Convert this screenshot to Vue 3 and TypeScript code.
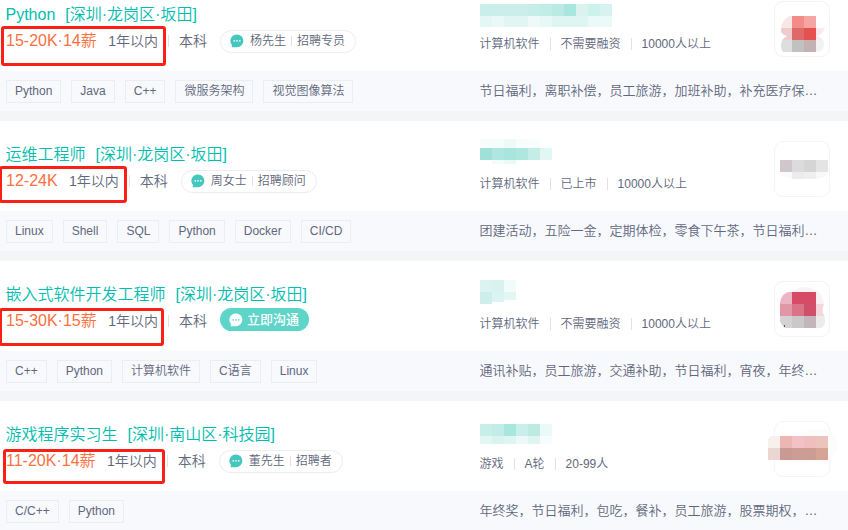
<script setup lang="ts">
interface Cell { x: number; y: number; w: number; h: number; c: string }
interface Job {
  title: string
  area: string
  salary: string
  contact?: [string, string]
  tags: string[]
  company: string[]
  benefits: string
  mark: string
  name: Cell[]
  logo: Cell[]
  clip: string
}

function row(x: number, y: number, h: number, colors: string): Cell[] {
  return colors.split(' ').map((c, i) => ({ x: x + i * 12, y, w: 12, h, c: '#' + c }))
}

const jobs: Job[] = [
  {
    title: 'Python', area: '[深圳·龙岗区·坂田]', salary: '15-20K·14薪',
    contact: ['杨先生', '招聘专员'],
    tags: ['Python', 'Java', 'C++', '微服务架构', '视觉图像算法'],
    company: ['计算机软件', '不需要融资', '10000人以上'],
    benefits: '节日福利，离职补偿，员工旅游，加班补助，补充医疗保…',
    mark: 'mark-a',
    name: [
      ...row(0, 3, 12, 'c8efe9 caefea caefea caefea c6eee8 c1ede7 b9eae4 a8e7df dbf3ef cbf2ed d6f3f2'),
      ...row(0, 15, 11, 'e3f7f5 eaf9f8 e1f6f4 e1f6f4 eef9f8 e7f8f6 dff5f2 dff5f2 dff5f2 ebf9f8 ebf9f8'),
    ],
    logo: [
      ...row(5, 15, 12, 'f9e6e6 f28c89 f6a5a2'),
      ...row(5, 27, 12, 'eecbcc df6868 e4514f fbe9eb'),
      ...row(5, 39, 12, 'dedede c1c1c2 c2b2b3 f2f2f2'),
    ],
    clip: 'M15 15H41V27H50Q47 34 42 35Q49 37 49 43Q49 51 41 51H8Q6 49 6 44Q6 38 12 35Q7 34 6 30Q6 18 15 15Z',
  },
  {
    title: '运维工程师', area: '[深圳·龙岗区·坂田]', salary: '12-24K',
    contact: ['周女士', '招聘顾问'],
    tags: ['Linux', 'Shell', 'SQL', 'Python', 'Docker', 'CI/CD'],
    company: ['计算机软件', '已上市', '10000人以上'],
    benefits: '团建活动，五险一金，定期体检，零食下午茶，节日福利…',
    mark: 'mark-b',
    name: [
      ...row(0, -2, 9, 'f8fdfc f5fcfb eef9f8 f8fcfc fafdfd'),
      ...row(0, 7, 12, '9fe1d8 afe7e0 a7e5de afe7e0 c5ede7 e2f6f3'),
      ...row(12, 19, 4, 'f4fbfa ebf9f7'),
    ],
    logo: [
      ...row(5, 19, 12, 'd0c7ca dcdcde d5d5d6 e4e4e5'),
      ...row(5, 31, 7, 'fafafa ececed efeff0 f8f8f8'),
    ],
    clip: 'M5 19H53V31Q51 38 39 38H17L5 34Z',
  },
  {
    title: '嵌入式软件开发工程师', area: '[深圳·龙岗区·坂田]', salary: '15-30K·15薪',
    tags: ['C++', 'Python', '计算机软件', 'C语言', 'Linux'],
    company: ['计算机软件', '不需要融资', '10000人以上'],
    benefits: '通讯补贴，员工旅游，交通补助，节日福利，宵夜，年终…',
    mark: 'mark-c',
    name: [
      ...row(0, -1, 12, 'dcf4f1 d8f2ef f0fbfa'),
      { x: 0, y: 11, w: 12, h: 12, c: '#cdeeea' },
      { x: 12, y: 11, w: 12, h: 10, c: '#dbf4f1' },
      { x: 24, y: 11, w: 12, h: 8, c: '#e2f6f3' },
    ],
    logo: [
      { x: 5, y: 6, w: 48, h: 5, c: '#f8f3f4' },
      ...row(5, 11, 12, 'edb4c2 d64c67 d64c67 fbf1f3'),
      ...row(5, 23, 12, 'e297a7 d87388 d15069 f4d7dd'),
      ...row(5, 35, 12, 'd4d2d3 cbc8ca c3b6bb ececed'),
      { x: 9, y: 44, w: 1, h: 2, c: '#55585c' },
    ],
    clip: 'M26 6Q47 6 49 23Q46 30 49 34Q52 45 46 47H10Q3 41 5 35V22Q6 11 18 10Z',
  },
  {
    title: '游戏程序实习生', area: '[深圳·南山区·科技园]', salary: '11-20K·14薪',
    contact: ['董先生', '招聘者'],
    tags: ['C/C++', 'Python'],
    company: ['游戏', 'A轮', '20-99人'],
    benefits: '年终奖，节日福利，包吃，餐补，员工旅游，股票期权，…',
    mark: 'mark-d',
    name: [
      ...row(0, 3, 12, 'c8eeea c2ece7 a8e7e0 c8efeb bdebe4 ebfaf9'),
      ...row(0, 15, 8, 'e4f6f3 d9f3ef dff5f2 edf9f8 dff5f2 f7fdfd'),
    ],
    logo: [
      { x: 5, y: 8, w: 58, h: 34, c: '#fcfcfc' },
      ...row(-7, 15, 12, 'f7f1ed ebb6b3 f2c2c7 efbfbf edc3be'),
      ...row(-7, 27, 12, 'ead6d3 cb9994 cd9c94 cc9d93 d7a394'),
    ],
    clip: 'M-4 15H5L40 8Q60 8 62 20Q64 34 53 39L25 43L5 39H-7V18Z',
  },
]
</script>

<template>
  <main class="list">
    <article v-for="(job, i) in jobs" :key="i" class="card">
      <div class="primary">
        <div class="position">
          <div class="title"><span>{{ job.title }}</span><span>{{ job.area }}</span></div>
          <div class="summary">
            <span class="salary">{{ job.salary }}</span>
            <span class="limit">1年以内</span>
            <i class="rule"></i>
            <span class="limit">本科</span>
            <span class="contact" :class="{ chat: !job.contact }">
              <svg class="bubble" width="14" height="14" viewBox="0 0 14 14">
                <path class="balloon" d="M7 .4A6.4 6.4 0 1 1 7 13.2H2Q1.3 13.1 1.7 12.4L2 11A6.4 6.4 0 0 1 7 .4Z" />
                <circle class="dot" cx="4.2" cy="6.9" r=".8" />
                <circle class="dot" cx="7" cy="6.9" r=".8" />
                <circle class="dot" cx="9.8" cy="6.9" r=".8" />
              </svg>
              <template v-if="job.contact">
                <span>{{ job.contact[0] }}</span><i class="rule small"></i><span>{{ job.contact[1] }}</span>
              </template>
              <span v-else>立即沟通</span>
            </span>
          </div>
        </div>
        <div class="company">
          <svg class="name" width="132" height="28" viewBox="0 0 132 28" shape-rendering="crispEdges">
            <rect v-for="(p, n) in job.name" :key="n" :x="p.x" :y="p.y" :width="p.w" :height="p.h" :fill="p.c" />
          </svg>
          <div class="facts">
            <template v-for="(fact, n) in job.company" :key="n">
              <i v-if="n" class="rule"></i><span>{{ fact }}</span>
            </template>
          </div>
        </div>
        <div class="logo">
          <svg width="54" height="54" viewBox="0 0 54 54">
            <clipPath :id="'logo' + i"><path :d="job.clip" /></clipPath>
            <g :clip-path="`url(#logo${i})`" shape-rendering="crispEdges">
              <rect v-for="(p, n) in job.logo" :key="n" :x="p.x" :y="p.y" :width="p.w" :height="p.h" :fill="p.c" />
            </g>
          </svg>
        </div>
      </div>
      <div class="footer">
        <div class="tags"><span v-for="tag in job.tags" :key="tag" class="tag">{{ tag }}</span></div>
        <div class="benefits">{{ job.benefits }}</div>
      </div>
      <div class="mark" :class="job.mark"></div>
    </article>
  </main>
</template>

<style>
body { overflow: hidden; background: #f4f5f7; }
</style>

<style scoped>
.list {
  display: flex;
  flex-direction: column;
  gap: 10px;
  height: 549px;
  margin-top: -19px;
  overflow: hidden;
  font-family: "Liberation Sans", "Noto Sans CJK SC", sans-serif;
  font-weight: 350;
  color: #61687c;
  white-space: nowrap;
}
.card { position: relative; flex: none; height: 130px; background: #fff; }
.primary, .footer {
  display: grid;
  grid-template-columns: 474px 294px 56px;
  padding-left: 6px;
}
.primary { height: 90px; }
.footer { height: 40px; align-items: center; background: #f8f9fd; }
.position { padding-top: 22px; }
.title { display: flex; gap: 10px; height: 24px; margin-left: -0.5px; line-height: 24px; font-size: 16px; color: #00beaf; }
.summary { display: flex; align-items: center; height: 28px; line-height: 28px; }
.salary { margin-right: 11.4px; font-size: 16px; color: #fc703e; }
.limit { font-size: 14px; }
.rule { width: 1px; height: 12px; margin: 0 10px; background: #e0e1e5; }
.contact {
  box-sizing: border-box;
  display: flex;
  align-items: center;
  height: 23px;
  margin-left: 13px;
  padding: 0 10px 0 9px;
  border: 1px solid #ededf0;
  border-radius: 12px;
  line-height: 21px;
  font-size: 12px;
}
.bubble { margin-right: 6px; }
.balloon { fill: #46c7bd; }
.dot { fill: #fff; }
.small { height: 10px; margin: 0 5px; }
.chat {
  margin-bottom: 3px;
  padding: 0 10px 0 9px;
  border: 0;
  background: #5dd5c8;
  color: #fff;
  font-size: 13px;
  font-weight: 500;
}
.chat .bubble { margin-right: 4px; }
.chat .balloon { fill: #fff; }
.chat .dot { fill: #5dd5c8; }
.company { padding-top: 20px; }
.name { display: block; overflow: visible; }
.facts { display: flex; align-items: center; height: 30px; margin-left: -0.5px; font-size: 12px; line-height: 28px; }
.logo {
  box-sizing: border-box;
  width: 56px;
  height: 56px;
  margin-top: 20px;
  border: 1px solid #f3f4fa;
  border-radius: 9px;
}
.logo svg { display: block; margin-top: -1px; overflow: visible; }
.tags { display: flex; gap: 10px; }
.tag {
  box-sizing: border-box;
  height: 23px;
  padding: 0 8px;
  border: 1px solid #ededef;
  line-height: 20px;
  font-size: 12px;
}
.benefits { height: 40px; margin-left: -0.5px; font-size: 13px; line-height: 40px; }
.mark { position: absolute; box-sizing: border-box; border: 3px solid #fb2015; border-radius: 3px; }
.mark-a { left: 1px; top: 45px; width: 165px; height: 40px; }
.mark-b { left: -1px; top: 45px; width: 128px; height: 37px; }
.mark-c { left: -1px; top: 47px; width: 165px; height: 38px; }
.mark-d { left: 3px; top: 48px; width: 162px; height: 35px; }
</style>
